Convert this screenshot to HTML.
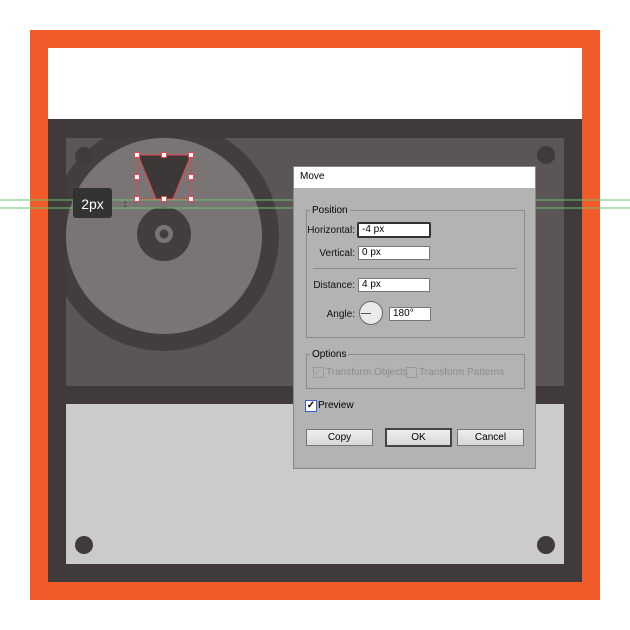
<!DOCTYPE html>
<html><head><style>
body{margin:0;width:630px;height:630px;background:#fff;position:relative;overflow:hidden;font-family:"Liberation Sans",sans-serif;}
.a{position:absolute}
.lbl{position:absolute;font-size:10px;color:#111;text-align:right}
.inp{position:absolute;background:#fff;border:1px solid #777;font-size:10px;padding-left:3px;box-sizing:border-box;line-height:12px}
.btn{position:absolute;height:17px;border:1px solid #777;background:linear-gradient(#eee,#d8d8d8);font-size:10px;text-align:center;line-height:15px;box-sizing:border-box}
</style></head><body>
<div class="a" style="left:30px;top:30px;width:570px;height:570px;background:#f15a29"></div>
<div class="a" style="left:48px;top:48px;width:534px;height:534px;background:#fff"></div>
<div class="a" style="left:48px;top:119px;width:534px;height:463px;background:#403b3a"></div>
<div class="a" style="left:66px;top:404px;width:498px;height:160px;background:#cbcbcb"></div>
<svg class="a" style="left:0;top:0" width="630" height="630">
<defs><clipPath id="c"><rect x="66" y="138" width="498" height="248"/></clipPath></defs>
<rect x="66" y="138" width="498" height="248" fill="#5b5655"/>
<g clip-path="url(#c)">
<circle cx="164" cy="236" r="115" fill="#433e3d"/>
<circle cx="164" cy="236" r="98" fill="#7a7574"/>
</g>
<circle cx="84" cy="156" r="9" fill="#403b3a"/>
<circle cx="546" cy="155" r="9" fill="#403b3a"/>
<circle cx="84" cy="545" r="9" fill="#403b3a"/>
<circle cx="546" cy="545" r="9" fill="#403b3a"/>
<circle cx="164" cy="234" r="27" fill="#433e3d"/>
<circle cx="164" cy="234" r="9" fill="#7a7574"/>
<circle cx="164" cy="234" r="4.5" fill="#433e3d"/>
<line x1="0" y1="200" x2="630" y2="200" stroke="#6bc46b" stroke-width="1"/>
<line x1="0" y1="208" x2="630" y2="208" stroke="#6bc46b" stroke-width="1"/>
<polygon points="138,155 191,155 173,199 156,199" fill="#3c3837" stroke="#e8434f" stroke-width="1"/>
<rect x="137" y="155" width="54" height="44" fill="none" stroke="#e8434f" stroke-width="0.8"/>
<g fill="#fff" stroke="#e8434f" stroke-width="1">
<rect x="134.5" y="152.5" width="5" height="5"/><rect x="161.5" y="152.5" width="5" height="5"/><rect x="188.5" y="152.5" width="5" height="5"/>
<rect x="134.5" y="174.5" width="5" height="5"/><rect x="188.5" y="174.5" width="5" height="5"/>
<rect x="134.5" y="196.5" width="5" height="5"/><rect x="161.5" y="196.5" width="5" height="5"/><rect x="188.5" y="196.5" width="5" height="5"/>
</g>
<rect x="73" y="188" width="39" height="30" rx="3" fill="#333"/>
<text x="92.5" y="209" font-size="14" fill="#fff" text-anchor="middle" font-family="Liberation Sans">2px</text>
<text x="125" y="207" font-size="10" fill="#333" text-anchor="middle">↕</text>
</svg>
<div class="a" style="left:293px;top:166px;width:243px;height:303px;background:#b3b3b3;border:1px solid #888;box-sizing:border-box"></div>
<div class="a" style="left:294px;top:167px;width:241px;height:21px;background:#fff;font-size:10px;line-height:20px;padding-left:6px;box-sizing:border-box">Move</div>
<div class="a" style="left:306px;top:210px;width:217px;height:126px;border:1px solid #8a8a8a"></div>
<div class="a" style="left:310px;top:205px;background:#b3b3b3;font-size:10px;padding:0 2px">Position</div>
<div class="lbl" style="left:300px;top:225px;width:55px">Horizontal:</div>
<div class="inp" style="left:357px;top:222px;width:74px;height:16px;border:2px solid #333;border-radius:2px;line-height:12px">-4 px</div>
<div class="lbl" style="left:300px;top:248px;width:55px">Vertical:</div>
<div class="inp" style="left:358px;top:246px;width:72px;height:14px">0 px</div>
<div class="a" style="left:313px;top:268px;width:204px;height:1px;background:#8a8a8a"></div>
<div class="lbl" style="left:300px;top:280px;width:55px">Distance:</div>
<div class="inp" style="left:358px;top:278px;width:72px;height:14px">4 px</div>
<div class="lbl" style="left:300px;top:309px;width:55px">Angle:</div>
<div class="a" style="left:359px;top:301px;width:24px;height:24px;border-radius:50%;background:#eaeaea;border:1px solid #666;box-sizing:border-box"></div>
<div class="a" style="left:361px;top:313px;width:10px;height:1px;background:#555"></div>
<div class="inp" style="left:389px;top:307px;width:42px;height:14px">180°</div>
<div class="a" style="left:306px;top:354px;width:217px;height:33px;border:1px solid #8a8a8a"></div>
<div class="a" style="left:310px;top:349px;background:#b3b3b3;font-size:10px;padding:0 2px">Options</div>
<div class="a" style="left:313px;top:367px;width:9px;height:9px;border:1px solid #999;font-size:8px;line-height:9px;color:#999">✓</div>
<div class="a" style="left:326px;top:367px;font-size:10px;color:#8c8c8c">Transform Objects</div>
<div class="a" style="left:406px;top:367px;width:9px;height:9px;border:1px solid #999"></div>
<div class="a" style="left:419px;top:367px;font-size:10px;color:#8c8c8c">Transform Patterns</div>
<div class="a" style="left:305px;top:400px;width:10px;height:10px;border:1px solid #3a5fcd;background:#fff;font-size:10px;line-height:10px;text-align:center;font-weight:bold">✓</div>
<div class="a" style="left:318px;top:400px;font-size:10px">Preview</div>
<div class="btn" style="left:306px;top:429px;width:67px">Copy</div>
<div class="btn" style="left:385px;top:428px;width:67px;height:19px;border:2px solid #444">OK</div>
<div class="btn" style="left:457px;top:429px;width:67px">Cancel</div>
</body></html>
